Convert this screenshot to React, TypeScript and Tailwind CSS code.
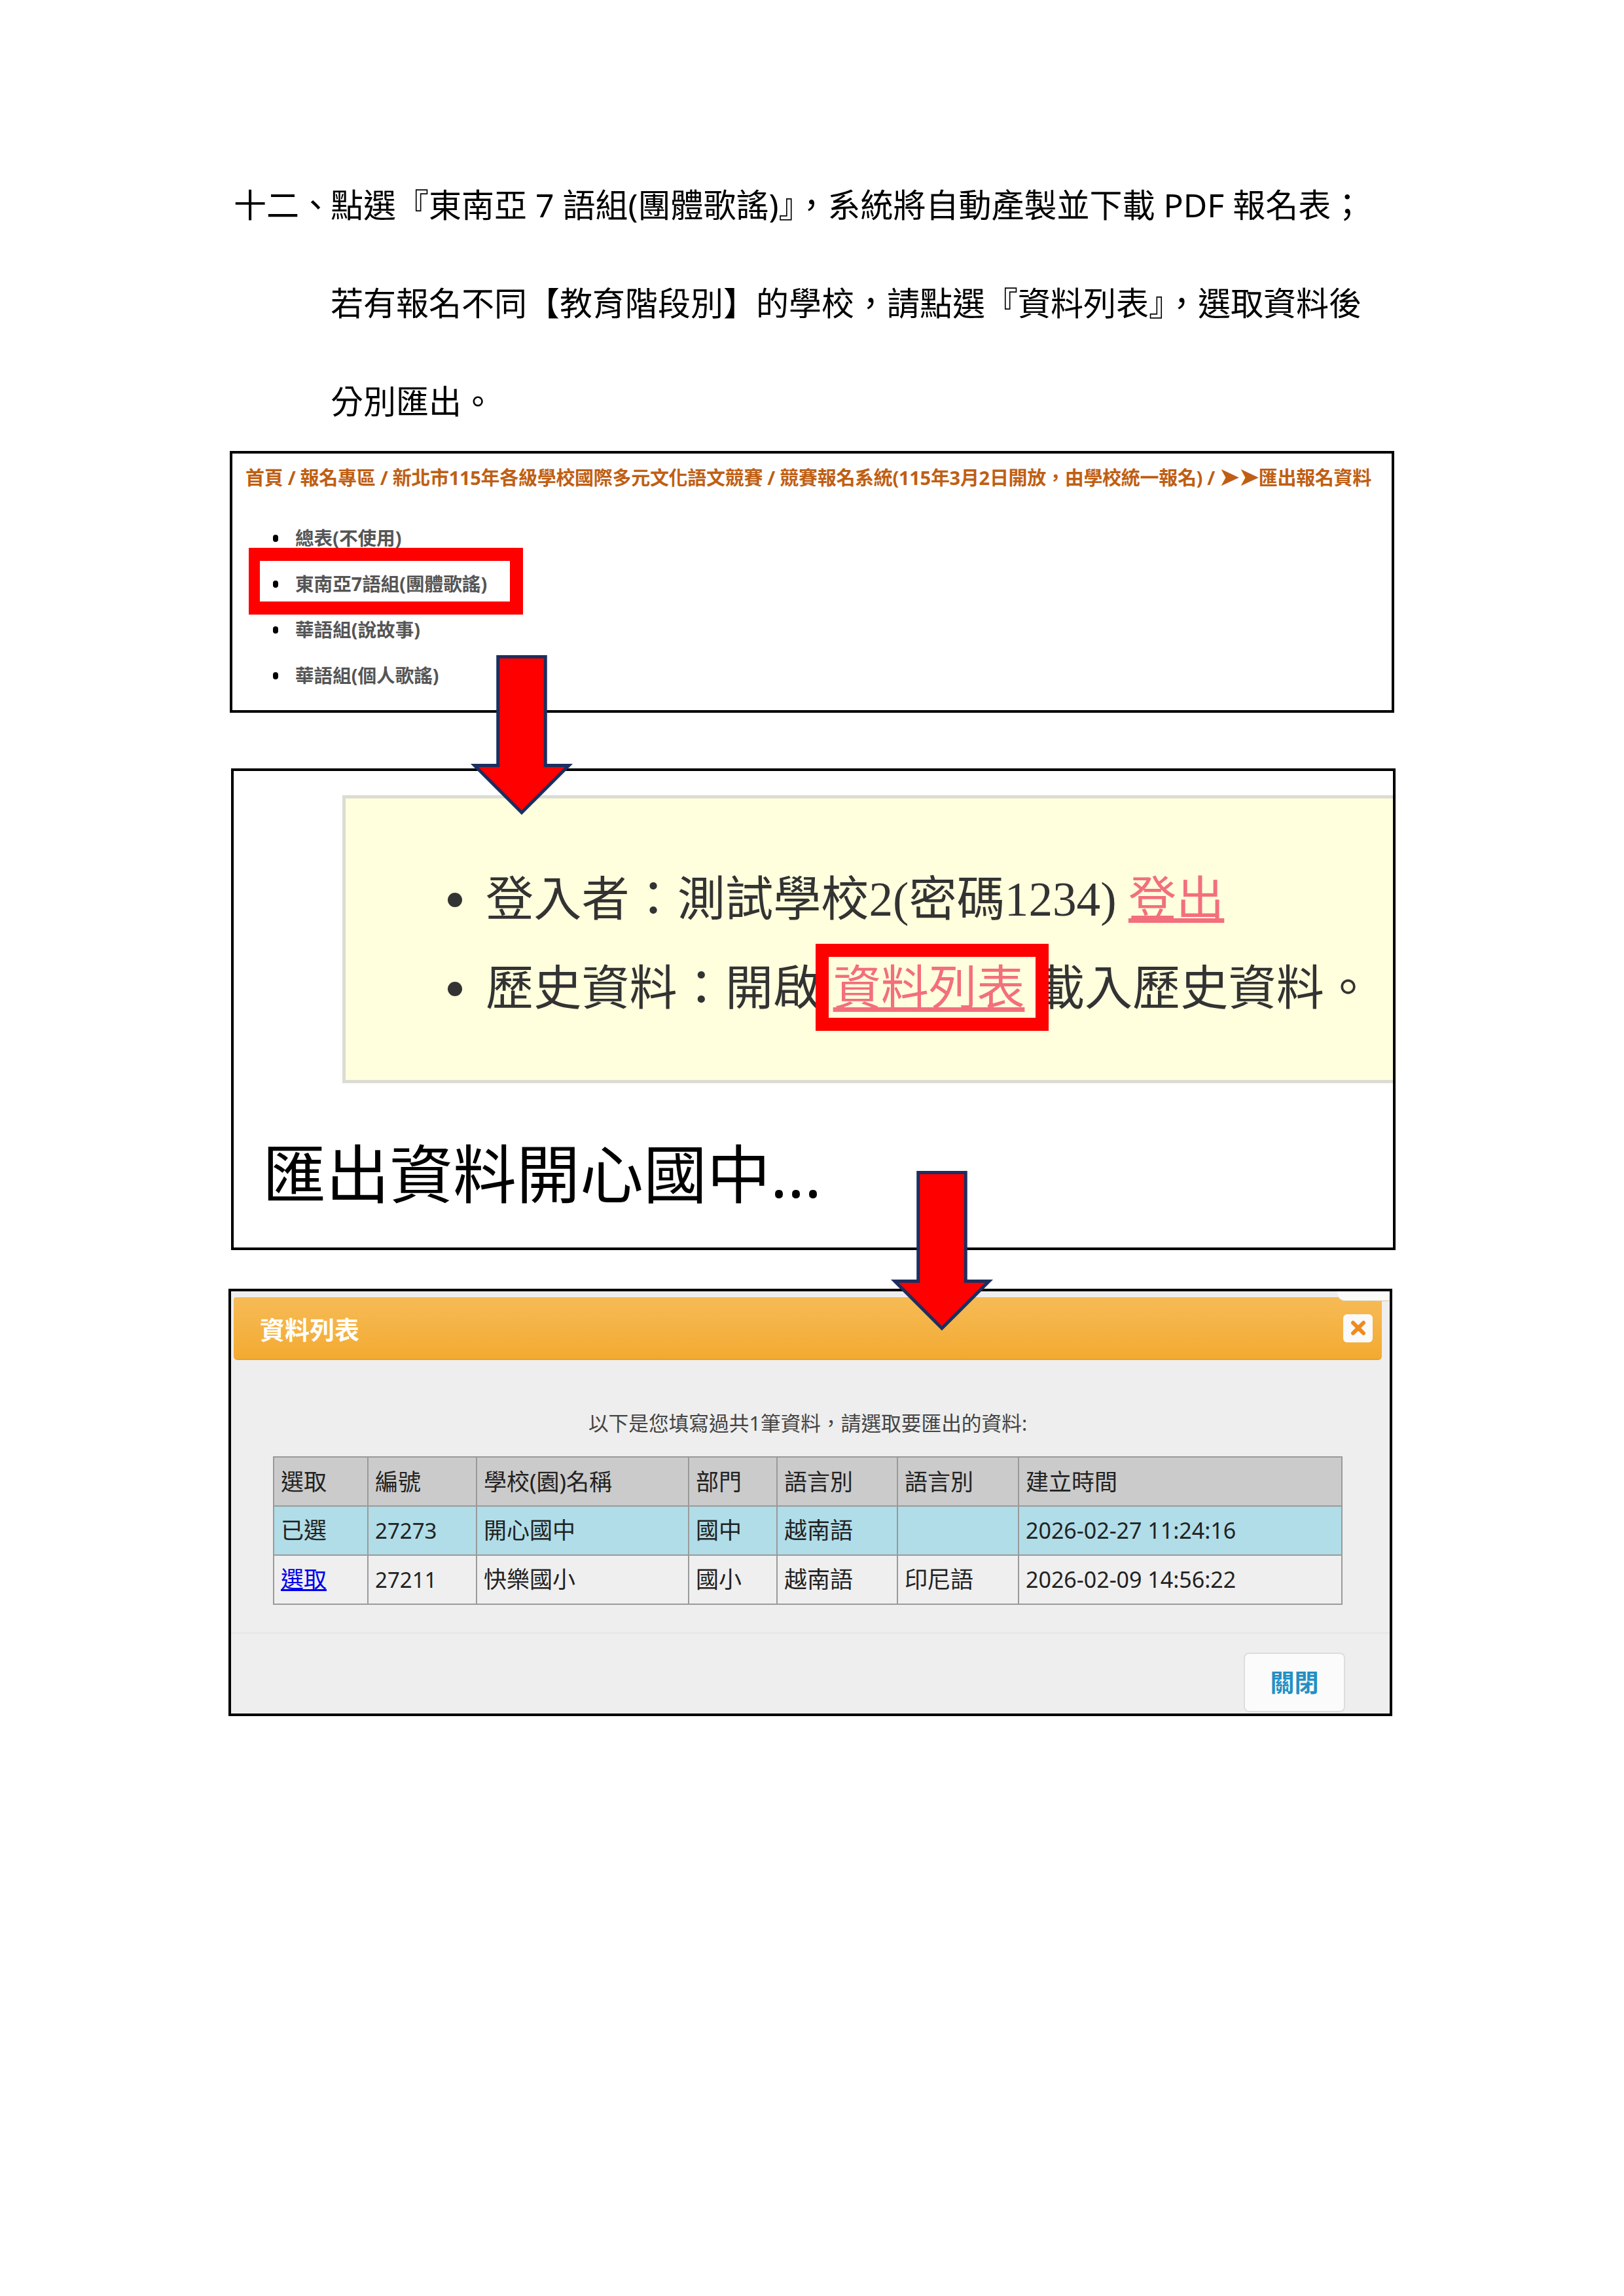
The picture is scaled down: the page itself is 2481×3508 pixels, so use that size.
import React from 'react';

const columns = [144, 166, 324, 135, 184, 185, 494];

const headers = ['選取', '編號', '學校(園)名稱', '部門', '語言別', '語言別', '建立時間'];

const rows = [
  { pick: '已選', id: '27273', school: '開心國中', dept: '國中', lang1: '越南語', lang2: '', time: '2026-02-27 11:24:16', selected: true },
  { pick: '選取', id: '27211', school: '快樂國小', dept: '國小', lang1: '越南語', lang2: '印尼語', time: '2026-02-09 14:56:22', selected: false }
];

const menu = ['總表(不使用)', '東南亞7語組(團體歌謠)', '華語組(說故事)', '華語組(個人歌謠)'];

function Arrow({ className }: { className: string }) {
  return (
    <svg className={className} viewBox="0 0 170 250" fill="none">
      <path
        d="M48.75 3.5H121.25V169.5H157L85 241.5L13 169.5H48.75Z"
        fill="#ff0000"
        stroke="#1c2f5e"
        strokeWidth="5"
      />
    </svg>
  );
}

export default function App() {
  return (
    <div
      lang="zh-Hant"
      className="relative w-[2481px] h-[3508px] bg-white text-black pt-[238px] font-['Noto_Sans','Noto_Sans_CJK_TC',sans-serif]"
    >
      {/* instructions */}
      <div className="pl-[357px] text-[50px] leading-[150px] whitespace-nowrap">
        <div className="flex">
          <span className="w-[148px]">十二、</span>
          <span>點選『東南亞 7 語組(團體歌謠)』，系統將自動產製並下載 PDF 報名表；</span>
        </div>
        <div className="pl-[148px]">若有報名不同【教育階段別】的學校，請點選『資料列表』，選取資料後</div>
        <div className="pl-[148px]">分別匯出。</div>
      </div>

      {/* step 1: menu */}
      <div className="relative mt-px ml-[351px] w-[1779px] h-[400px] border-4 border-black">
        <div className="mt-[17px] ml-5 h-9 text-[29px] tracking-[-0.3px] leading-9 font-bold whitespace-nowrap text-[#bf5f14]">
          首頁 / 報名專區 / 新北市115年各級學校國際多元文化語文競賽 / 競賽報名系統(115年3月2日開放，由學校統一報名) / <span className="text-[36px] leading-none">➤➤</span>匯出報名資料
        </div>
        <ul className="mt-[41px]">
          {menu.map((item) => (
            <li key={item} className="flex items-center h-[70px] pl-[62px] text-[28.6px] font-bold text-[#555555]">
              <span className="w-2 h-[11px] rounded-full bg-black mr-[26px]"></span>
              {item}
            </li>
          ))}
        </ul>
        <div className="absolute left-[25px] top-[144px] w-[419px] h-[102px] border-y-[20px] border-l-[17px] border-r-[20px] border-[#ff0000]"></div>
      </div>

      {/* step 2: export notice */}
      <div className="relative mt-[85px] ml-[353px] w-[1779px] h-[736px] border-4 border-black overflow-hidden">
        <div className="mt-[37px] ml-[166px] h-[440px] border-y-[5px] border-l-[5px] border-[#dcdcd4] bg-[#ffffdd] pt-[86px] text-[#333333] text-[73.2px] font-['Liberation_Serif','Noto_Sans_CJK_TC',serif] whitespace-nowrap">
          <div className="flex items-center h-[138px] pl-[156px]">
            <span className="w-[22px] h-[22px] rounded-full bg-[#333333] mr-[36px]"></span>
            <span>
              登入者：測試學校2(密碼1234) <span className="underline text-[#f26f7d]">登出</span>
            </span>
          </div>
          <div className="flex items-center h-[134px] pl-[156px]">
            <span className="w-[22px] h-[22px] rounded-full bg-[#333333] mr-[36px]"></span>
            <span>
              歷史資料：開啟 <span className="underline text-[#f26f7d]">資料列表</span> 載入歷史資料。
            </span>
          </div>
        </div>
        <div className="mt-[72px] ml-[44px] h-[130px] text-[97px] leading-[130px] whitespace-nowrap">
          匯出資料開心國中...
        </div>
        <div className="absolute left-[889px] top-[264px] w-[356px] h-[133px] border-[20px] border-[#ff0000]"></div>
      </div>

      {/* step 3: data list dialog */}
      <div className="relative mt-[59px] ml-[349px] w-[1778px] h-[653px] border-4 border-black bg-[#eeeeee] overflow-hidden">
        <div className="absolute right-0 top-0 w-[80px] h-[15px] bg-[#fbfbf8] rounded-bl-[12px] border-b border-[#d9c9a5]"></div>
        <div className="flex items-center mt-[9px] ml-1 w-[1754px] h-[96px] rounded-b-md rounded-t-sm bg-gradient-to-b from-[#f6bb55] to-[#f3aa30] border-b-2 border-[#e8a02a]">
          <span className="ml-[40px] mt-1 text-[38px] font-bold text-white">資料列表</span>
          <span className="ml-auto mr-[14px] w-[45px] h-[43px] rounded-md bg-[#fafafa] flex items-center justify-center">
            <svg className="w-[24px] h-[24px]" viewBox="0 0 24 24" fill="none">
              <path d="M4 4L20 20M20 4L4 20" stroke="#f08a1c" strokeWidth="6" strokeLinecap="round" />
            </svg>
          </span>
        </div>
        <div className="mt-[76px] h-10 pr-2 text-center text-[30.7px] leading-10 text-[#444444] whitespace-nowrap">
          以下是您填寫過共1筆資料，請選取要匯出的資料:
        </div>
        <table className="mt-[31px] ml-[64px] w-[1632px] table-fixed border-collapse text-[35px] text-[#222222]">
          <colgroup>
            {columns.map((w, i) => (
              <col key={i} style={{ width: w }} />
            ))}
          </colgroup>
          <thead>
            <tr className="h-[75px] bg-[#cbcbcb]">
              {headers.map((h, i) => (
                <th key={i} className="border-2 border-[#9a9a9a] pl-2.5 pt-0.5 text-left font-normal">
                  {h}
                </th>
              ))}
            </tr>
          </thead>
          <tbody>
            {rows.map((row) => (
              <tr key={row.id} className={row.selected ? 'h-[75px] bg-[#b0dde8]' : 'h-[75px] bg-[#efefef]'}>
                <td className="border-2 border-[#9a9a9a] pl-2.5">
                  {row.selected ? row.pick : <span className="underline text-[#0000ee]">{row.pick}</span>}
                </td>
                <td className="border-2 border-[#9a9a9a] pl-2.5 text-[33px]">{row.id}</td>
                <td className="border-2 border-[#9a9a9a] pl-2.5">{row.school}</td>
                <td className="border-2 border-[#9a9a9a] pl-2.5">{row.dept}</td>
                <td className="border-2 border-[#9a9a9a] pl-2.5">{row.lang1}</td>
                <td className="border-2 border-[#9a9a9a] pl-2.5">{row.lang2}</td>
                <td className="border-2 border-[#9a9a9a] pl-2.5 text-[34px] whitespace-nowrap">{row.time}</td>
              </tr>
            ))}
          </tbody>
        </table>
        <div className="mt-[42px] border-t-2 border-[#e6e6e6] flex justify-end pt-[29px] pr-[68px]">
          <button className="w-[155px] h-[91px] rounded-lg border-2 border-[#dddddd] bg-[#fbfbfb] text-[37px] font-bold text-[#2390c4]">
            關閉
          </button>
        </div>
      </div>

      {/* arrows between the steps */}
      <Arrow className="absolute left-[712px] top-[1000px] w-[170px] h-[250px]" />
      <Arrow className="absolute left-[1354px] top-[1788px] w-[170px] h-[250px]" />
    </div>
  );
}
